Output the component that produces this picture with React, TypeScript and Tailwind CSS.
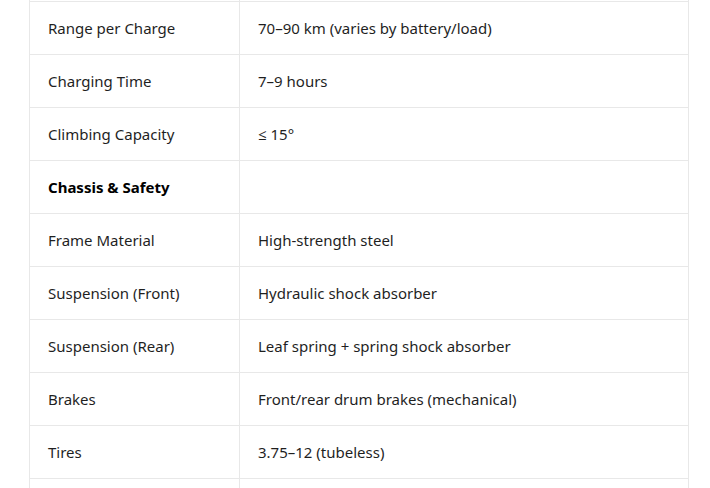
const rows: { label: string; value: string; heading?: boolean }[] = [
  { label: 'Range per Charge', value: '70–90 km (varies by battery/load)' },
  { label: 'Charging Time', value: '7–9 hours' },
  { label: 'Climbing Capacity', value: '≤ 15°' },
  { label: 'Chassis & Safety', value: '', heading: true },
  { label: 'Frame Material', value: 'High-strength steel' },
  { label: 'Suspension (Front)', value: 'Hydraulic shock absorber' },
  { label: 'Suspension (Rear)', value: 'Leaf spring + spring shock absorber' },
  { label: 'Brakes', value: 'Front/rear drum brakes (mechanical)' },
  { label: 'Tires', value: '3.75–12 (tubeless)' },
  { label: '', value: '' },
];

export default function App() {
  return (
    <div
      className="h-[488px] overflow-hidden bg-white pl-[29px] text-[15px] text-[#1f1f1f]"
      style={{ fontFamily: '"Noto Sans", "Open Sans", sans-serif' }}
    >
      <div className="w-[660px] border-x border-[#e8e8e8]">
        {/* tail of the previous row */}
        <div className="grid h-px grid-cols-[210px_1fr]">
          <div className="border-r border-[#e8e8e8]" />
          <div />
        </div>
        {rows.map((r, i) => (
          <div key={i} className="grid h-[53px] grid-cols-[210px_1fr] border-t border-[#e8e8e8]">
            <div
              className={`flex items-center border-r border-[#e8e8e8] pl-[18px] ${
                r.heading ? 'font-bold text-black' : ''
              }`}
            >
              {r.label}
            </div>
            <div className="flex items-center pl-[18px]">{r.value}</div>
          </div>
        ))}
      </div>
    </div>
  );
}
